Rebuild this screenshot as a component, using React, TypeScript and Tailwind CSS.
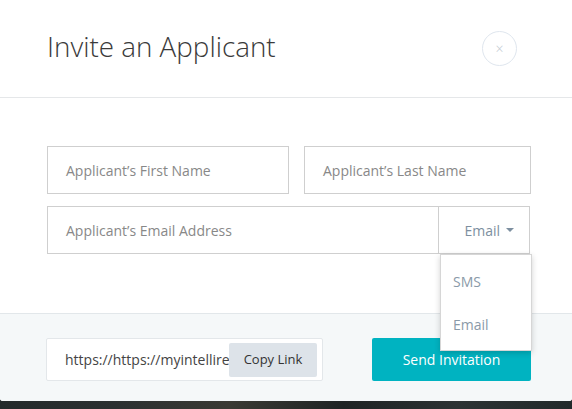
import React from "react";

export default function App() {
  return (
    <div className="w-[572px] h-[409px] overflow-hidden bg-[#1d2324] font-['Open_Sans',sans-serif]">
      <div className="bg-white rounded-b-[3px] relative">
        {/* Header */}
        <div className="h-[98px] border-b border-[#e5e7e9] flex items-center justify-between pl-[47px] pr-[55px]">
          <h1 className="text-[27.8px] font-light text-[#3a3a3a] leading-none -mt-[4px]">Invite an Applicant</h1>
          <button className="w-[35px] h-[35px] rounded-full border border-[#dfe6ee] flex items-center justify-center text-[#c3cbd3] text-[14px] leading-none font-light">
            ×
          </button>
        </div>
        {/* Body */}
        <div className="pl-[47px] pr-[41px] pt-[48px] pb-[59px]">
          <div className="flex gap-[15px]">
            <div className="w-[242px] h-[48px] border border-[#cfcfcf] flex items-center pl-[18px] text-[14px] text-[#888]">
              Applicant’s First Name
            </div>
            <div className="flex-1 h-[48px] border border-[#cfcfcf] flex items-center pl-[18px] text-[14px] text-[#888]">
              Applicant’s Last Name
            </div>
          </div>
          <div className="mt-[12px] flex h-[48px] border border-[#cfcfcf] w-[483px] relative">
            <div className="flex-1 flex items-center pl-[18px] text-[14px] text-[#888]">
              Applicant’s Email Address
            </div>
            <div className="w-[91px] border-l border-[#cfcfcf] flex items-center justify-end pr-[15px] gap-[6px] text-[14px] text-[#7d8fa0]">
              <span>Email</span>
              <span className="w-0 h-0 border-l-[4px] border-r-[4px] border-t-[4px] border-l-transparent border-r-transparent border-t-[#7d8fa0]" />
            </div>
            <div className="absolute left-[392px] top-[47px] w-[92px] h-[97px] bg-white border border-[#d6d6d6] shadow-[0_2px_6px_rgba(0,0,0,0.18)] z-10 flex flex-col pl-[12px] pt-[16px] text-[14px] text-[#8a9aa8]">
              <div className="h-[22px] leading-[22px]">SMS</div>
              <div className="h-[22px] leading-[22px] mt-[21px]">Email</div>
            </div>
          </div>
        </div>
        {/* Footer */}
        <div className="bg-[#f5f8f9] border-t border-[#e2e7ea] h-[88px] pl-[46px] pr-[41px] pt-[24px] flex gap-[49px] rounded-b-[3px]">
          <div className="w-[277px] h-[43px] bg-white border border-[#e3e7ea] rounded-[2px] flex items-center pr-[5px] overflow-hidden">
            <div className="flex-1 min-w-0 overflow-hidden whitespace-nowrap pl-[18px] text-[14px] text-[#444]">
              https://https://myintellirecruit.com/invite
            </div>
            <button className="w-[88px] h-[34px] bg-[#dde3e9] rounded-[2px] text-[13px] text-[#333] shrink-0">
              Copy Link
            </button>
          </div>
          <button className="w-[159px] h-[43px] bg-[#00b3c1] rounded-[2px] text-white text-[14px]">
            Send Invitation
          </button>
        </div>
      </div>
      <div className="h-[8px] bg-[linear-gradient(90deg,#232a2b_0%,#2b3031_20%,#3a3a34_40%,#1e2324_60%,#2c3334_80%,#222a2b_100%)]" />
    </div>
  );
}
